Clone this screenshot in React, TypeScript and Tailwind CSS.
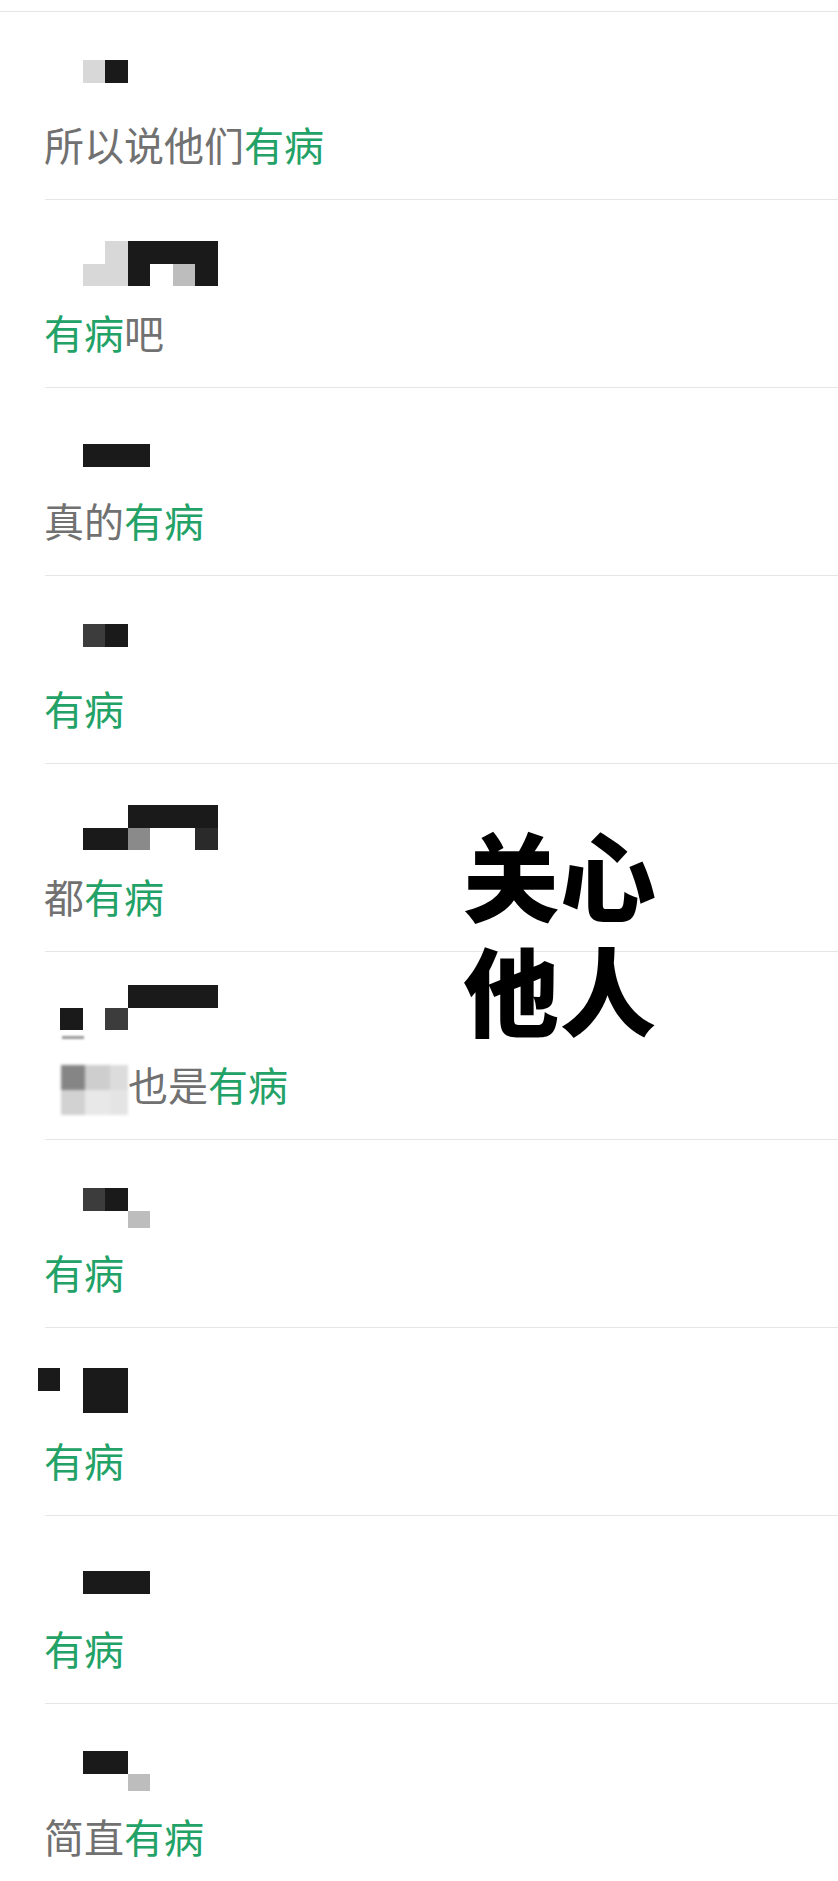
import React from 'react';

// mosaic cell shades
const shade: Record<string, string> = {
  k: 'bg-[#1a1a1a]',
  d: 'bg-[#3c3c3c]',
  e: 'bg-[#2a2a2a]',
  g: 'bg-[#8a8a8a]',
  s: 'bg-[#bdbdbd]',
  l: 'bg-[#d8d8d8]',
  n: 'bg-transparent',
};

type MosaicRow = { cells: string; short?: boolean };

type Comment = {
  top: string; // padding above mosaic, as a class
  mosaic: MosaicRow[];
  pre?: string[]; // plain part before the highlight
  post?: string;
  blurPrefix?: boolean;
  dash?: boolean;
};

// cells start at column -2 (x = 37.5), 22.5px each
const comments: Comment[] = [
  { top: 'pt-[48px]', mosaic: [{ cells: 'nnlk' }], pre: ['所以说他们'] },
  { top: 'pt-[41px]', mosaic: [{ cells: 'nnnlkkkk' }, { cells: 'nnllknsk' }], post: '吧' },
  { top: 'pt-[56px]', mosaic: [{ cells: 'nnkkk' }], pre: ['真的'] },
  { top: 'pt-[48px]', mosaic: [{ cells: 'nndk' }] },
  { top: 'pt-[41px]', mosaic: [{ cells: 'nnnnkkkk' }, { cells: 'nnkkgnne' }], pre: ['都'] },
  { top: 'pt-[33px]', mosaic: [{ cells: 'nnnnkkkk' }, { cells: 'nkndn' }], pre: ['也是'], blurPrefix: true, dash: true },
  { top: 'pt-[48px]', mosaic: [{ cells: 'nndk' }, { cells: 'nnnns', short: true }] },
  { top: 'pt-[40px]', mosaic: [{ cells: 'knkk' }, { cells: 'nnkk' }] },
  { top: 'pt-[55px]', mosaic: [{ cells: 'nnkkk' }] },
  { top: 'pt-[47px]', mosaic: [{ cells: 'nnkk' }, { cells: 'nnnns', short: true }], pre: ['简直'] },
];

const Mosaic = ({ rows }: { rows: MosaicRow[] }) => (
  <div className="ml-[37.5px] flex flex-col">
    {rows.map((r, i) => (
      <div key={i} className="flex">
        {r.cells.split('').map((c, j) => (
          <div key={j} className={`w-[22.5px] ${r.short ? 'h-[17px]' : 'h-[22.5px]'} ${shade[c]}`} />
        ))}
      </div>
    ))}
  </div>
);

const CommentRow = ({ c, first }: { c: Comment; first: boolean }) => (
  <div className="h-[188px]">
    <div className={`h-px bg-[#e6e6e6] ${first ? 'ml-0' : 'ml-[45px]'}`} />
    <div className={`h-[112px] ${c.top}`}>
      <Mosaic rows={c.mosaic} />
      {c.dash && <div className="ml-[62px] mt-[6px] h-[3px] w-[22px] bg-[#9a9a9a] blur-[1px]" />}
    </div>
    <div className="flex items-start h-[40px]">
      {c.blurPrefix ? (
        <div className="ml-[61px] mt-px w-[67px] grid grid-cols-[24px_25px_18px] grid-rows-[25px_25px] blur-[1.5px]">
          <div className="bg-[#858585]" />
          <div className="bg-[#cecece]" />
          <div className="bg-[#dcdcdc]" />
          <div className="bg-[#d2d2d2]" />
          <div className="bg-[#e8e8e8]" />
          <div className="bg-[#e4e4e4]" />
        </div>
      ) : (
        <div className="w-[44px]" />
      )}
      <p className="text-[40px] leading-[40px] whitespace-nowrap text-[#717171]">
        {c.pre?.join('')}
        <span className="text-[#22a266]">有病</span>
        {c.post}
      </p>
    </div>
  </div>
);

export default function App() {
  return (
    <div className="relative w-[838px] h-[1881px] overflow-hidden bg-white font-['Noto_Sans_CJK_SC',sans-serif]">
      <div className="pt-[11px]">
        {comments.map((c, i) => (
          <CommentRow key={i} c={c} first={i === 0} />
        ))}
      </div>

      {/* sticker text over the list */}
      <div className="absolute left-[463px] top-[815px] text-[96px] leading-[115px] font-black tracking-[1px] text-black">
        <div>关心</div>
        <div>他人</div>
      </div>
    </div>
  );
}
